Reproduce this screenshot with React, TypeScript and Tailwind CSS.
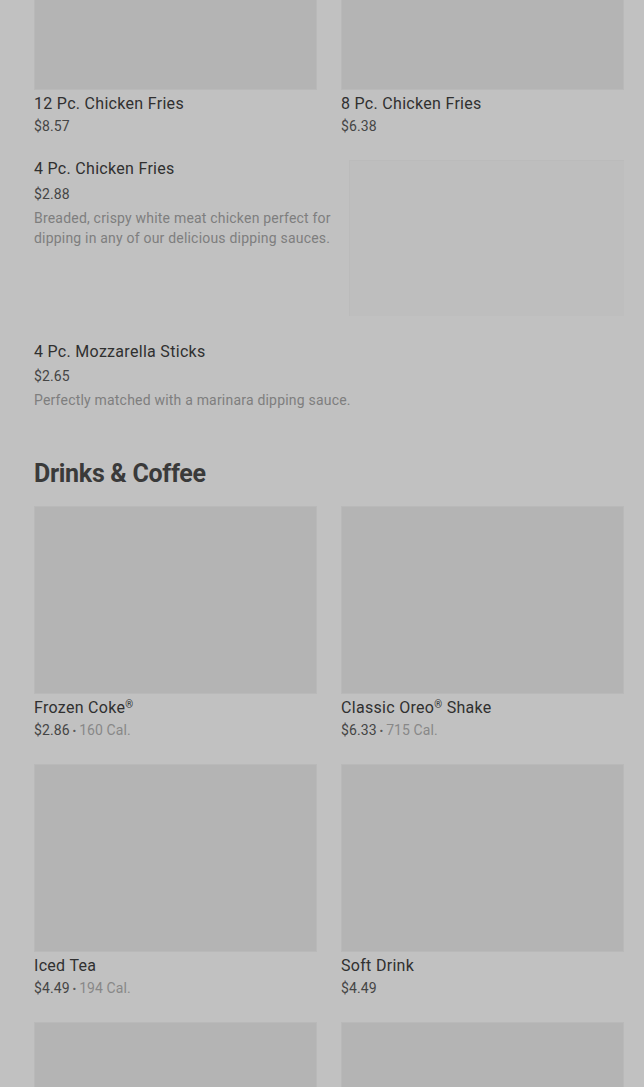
import React from 'react';

type Item = { name: string; price: string; cal?: string };

const topItems: Item[] = [
    { name: '12 Pc. Chicken Fries', price: '$8.57' },
    { name: '8 Pc. Chicken Fries', price: '$6.38' },
];

const drinks: Item[] = [
    { name: 'Frozen Coke®', price: '$2.86', cal: '160 Cal.' },
    { name: 'Classic Oreo® Shake', price: '$6.33', cal: '715 Cal.' },
    { name: 'Iced Tea', price: '$4.49', cal: '194 Cal.' },
    { name: 'Soft Drink', price: '$4.49' },
    { name: '', price: '' },
    { name: '', price: '' },
];

const titleCls = 'text-[16px] leading-6 font-normal tracking-[0.3px] text-[#303030]';
const priceCls = 'h-5 text-[14px] leading-5 tracking-[0.1px] text-[#454545]';
const descCls = 'text-[14px] leading-5 tracking-[0.2px] text-[#7e7e7e]';

// small raised ® like the menu font draws it
const Name: React.FC<{ text: string }> = ({ text }) => {
    const parts = text.split('®');
    return (
        <>
            {parts.map((p, i) => (
                <React.Fragment key={i}>
                    {p}
                    {i < parts.length - 1 && <span className="relative -top-[5px] text-[10px] leading-none">®</span>}
                </React.Fragment>
            ))}
        </>
    );
};

const Card: React.FC<{ item: Item }> = ({ item }) => (
    <div className="flex flex-col">
        <div className="h-[188px] w-full bg-[#b4b4b4] border border-[#b9b9b9]" />
        {item.name && (
            <>
                <p className={`mt-[2px] h-6 ${titleCls}`}>
                    <Name text={item.name} />
                </p>
                <p className={priceCls}>
                    {item.price}
                    {item.cal && (
                        <>
                            <span className="text-[11px] leading-none text-[#5a5a5a]"> • </span>
                            <span className="text-[#888888]">{item.cal}</span>
                        </>
                    )}
                </p>
            </>
        )}
    </div>
);

export default function App() {
    return (
        <div
            className="h-[1087px] overflow-hidden bg-[#c1c1c1] pl-[34px] pr-[20px]"
            style={{ fontFamily: 'Roboto, "Liberation Sans", sans-serif' }}
        >
            {/* top row, scrolled partly out of view */}
            <div className="-mt-[98px] grid grid-cols-2 gap-x-6">
                {topItems.map((it) => (
                    <Card key={it.name} item={it} />
                ))}
            </div>

            <div className="mt-[21px] flex gap-3">
                <div className="flex-1">
                    <p className={titleCls}>4 Pc. Chicken Fries</p>
                    <p className={`mt-[3px] ${priceCls}`}>$2.88</p>
                    <p className={`mt-[4px] ${descCls}`}>
                        Breaded, crispy white meat chicken perfect for dipping in any of our delicious dipping sauces.
                    </p>
                </div>
                <div className="mt-[3px] h-[156px] w-[275px] shrink-0 bg-[#bebebe] border-l border-t border-[#bbbbbb]" />
            </div>

            <div className="mt-[24px]">
                <p className={titleCls}>4 Pc. Mozzarella Sticks</p>
                <p className={`mt-[2px] ${priceCls}`}>$2.65</p>
                <p className={`mt-[4px] ${descCls}`}>Perfectly matched with a marinara dipping sauce.</p>
            </div>

            <h2 className="mt-[48px] text-[25px] leading-8 font-bold tracking-[-0.3px] text-[#3a3a3a]">
                Drinks &amp; Coffee
            </h2>

            <div className="mt-[16px] grid grid-cols-2 gap-x-6 gap-y-6">
                {drinks.map((it, i) => (
                    <Card key={i} item={it} />
                ))}
            </div>
        </div>
    );
}
